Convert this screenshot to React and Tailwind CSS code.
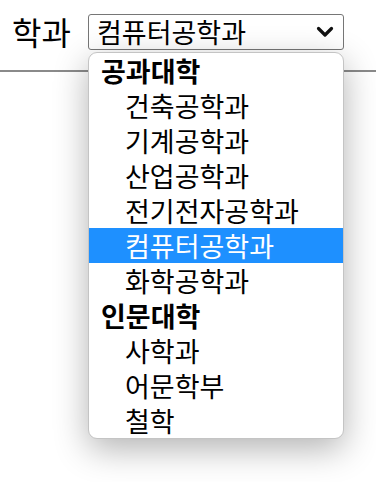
import React from 'react';

const groups = [
  { label: '공과대학', items: ['건축공학과', '기계공학과', '산업공학과', '전기전자공학과', '컴퓨터공학과', '화학공학과'] },
  { label: '인문대학', items: ['사학과', '어문학부', '철학'] },
];

const selected = '컴퓨터공학과';

function Chevron() {
  return (
    <svg width="18" height="12" viewBox="0 0 18 12" className="shrink-0">
      <path d="M2.5 2.5 L9 9 L15.5 2.5" fill="none" stroke="#111" strokeWidth="3.2" strokeLinecap="round" strokeLinejoin="round" />
    </svg>
  );
}

export default function App() {
  return (
    <div
      className="relative w-[376px] h-[482px] bg-white overflow-hidden text-black"
      style={{ fontFamily: '"Noto Sans CJK KR", "Noto Sans", sans-serif' }}
    >
      {/* 상단 폼 줄 */}
      <div className="flex items-start h-[72px] pt-[14px] border-b-2 border-[#8a8a8a]">
        <span className="w-[88px] pl-[12px] text-[32px] leading-[34px]">학과</span>
        <div className="flex items-center justify-between w-[256px] h-[36px] border border-[#767676] rounded-[3px] pl-[8px] pr-[9px]">
          <span className="text-[27px] leading-[34px]">{selected}</span>
          <Chevron />
        </div>
      </div>

      {/* 열린 드롭다운 목록 */}
      <div className="absolute left-[88px] top-[52px] w-[256px] bg-white border border-[#c4c4c4] rounded-[9px] overflow-hidden shadow-[0_10px_34px_rgba(0,0,0,0.3)]">
        {groups.map((g) => (
          <div key={g.label}>
            <div className="pl-[12px] text-[27px] font-bold leading-[35px]">{g.label}</div>
            {g.items.map((it) => (
              <div
                key={it}
                className={
                  'pl-[36px] text-[27px] leading-[35px] ' +
                  (it === selected ? 'bg-[#1e90ff] text-white' : '')
                }
              >
                {it}
              </div>
            ))}
          </div>
        ))}
      </div>
    </div>
  );
}
